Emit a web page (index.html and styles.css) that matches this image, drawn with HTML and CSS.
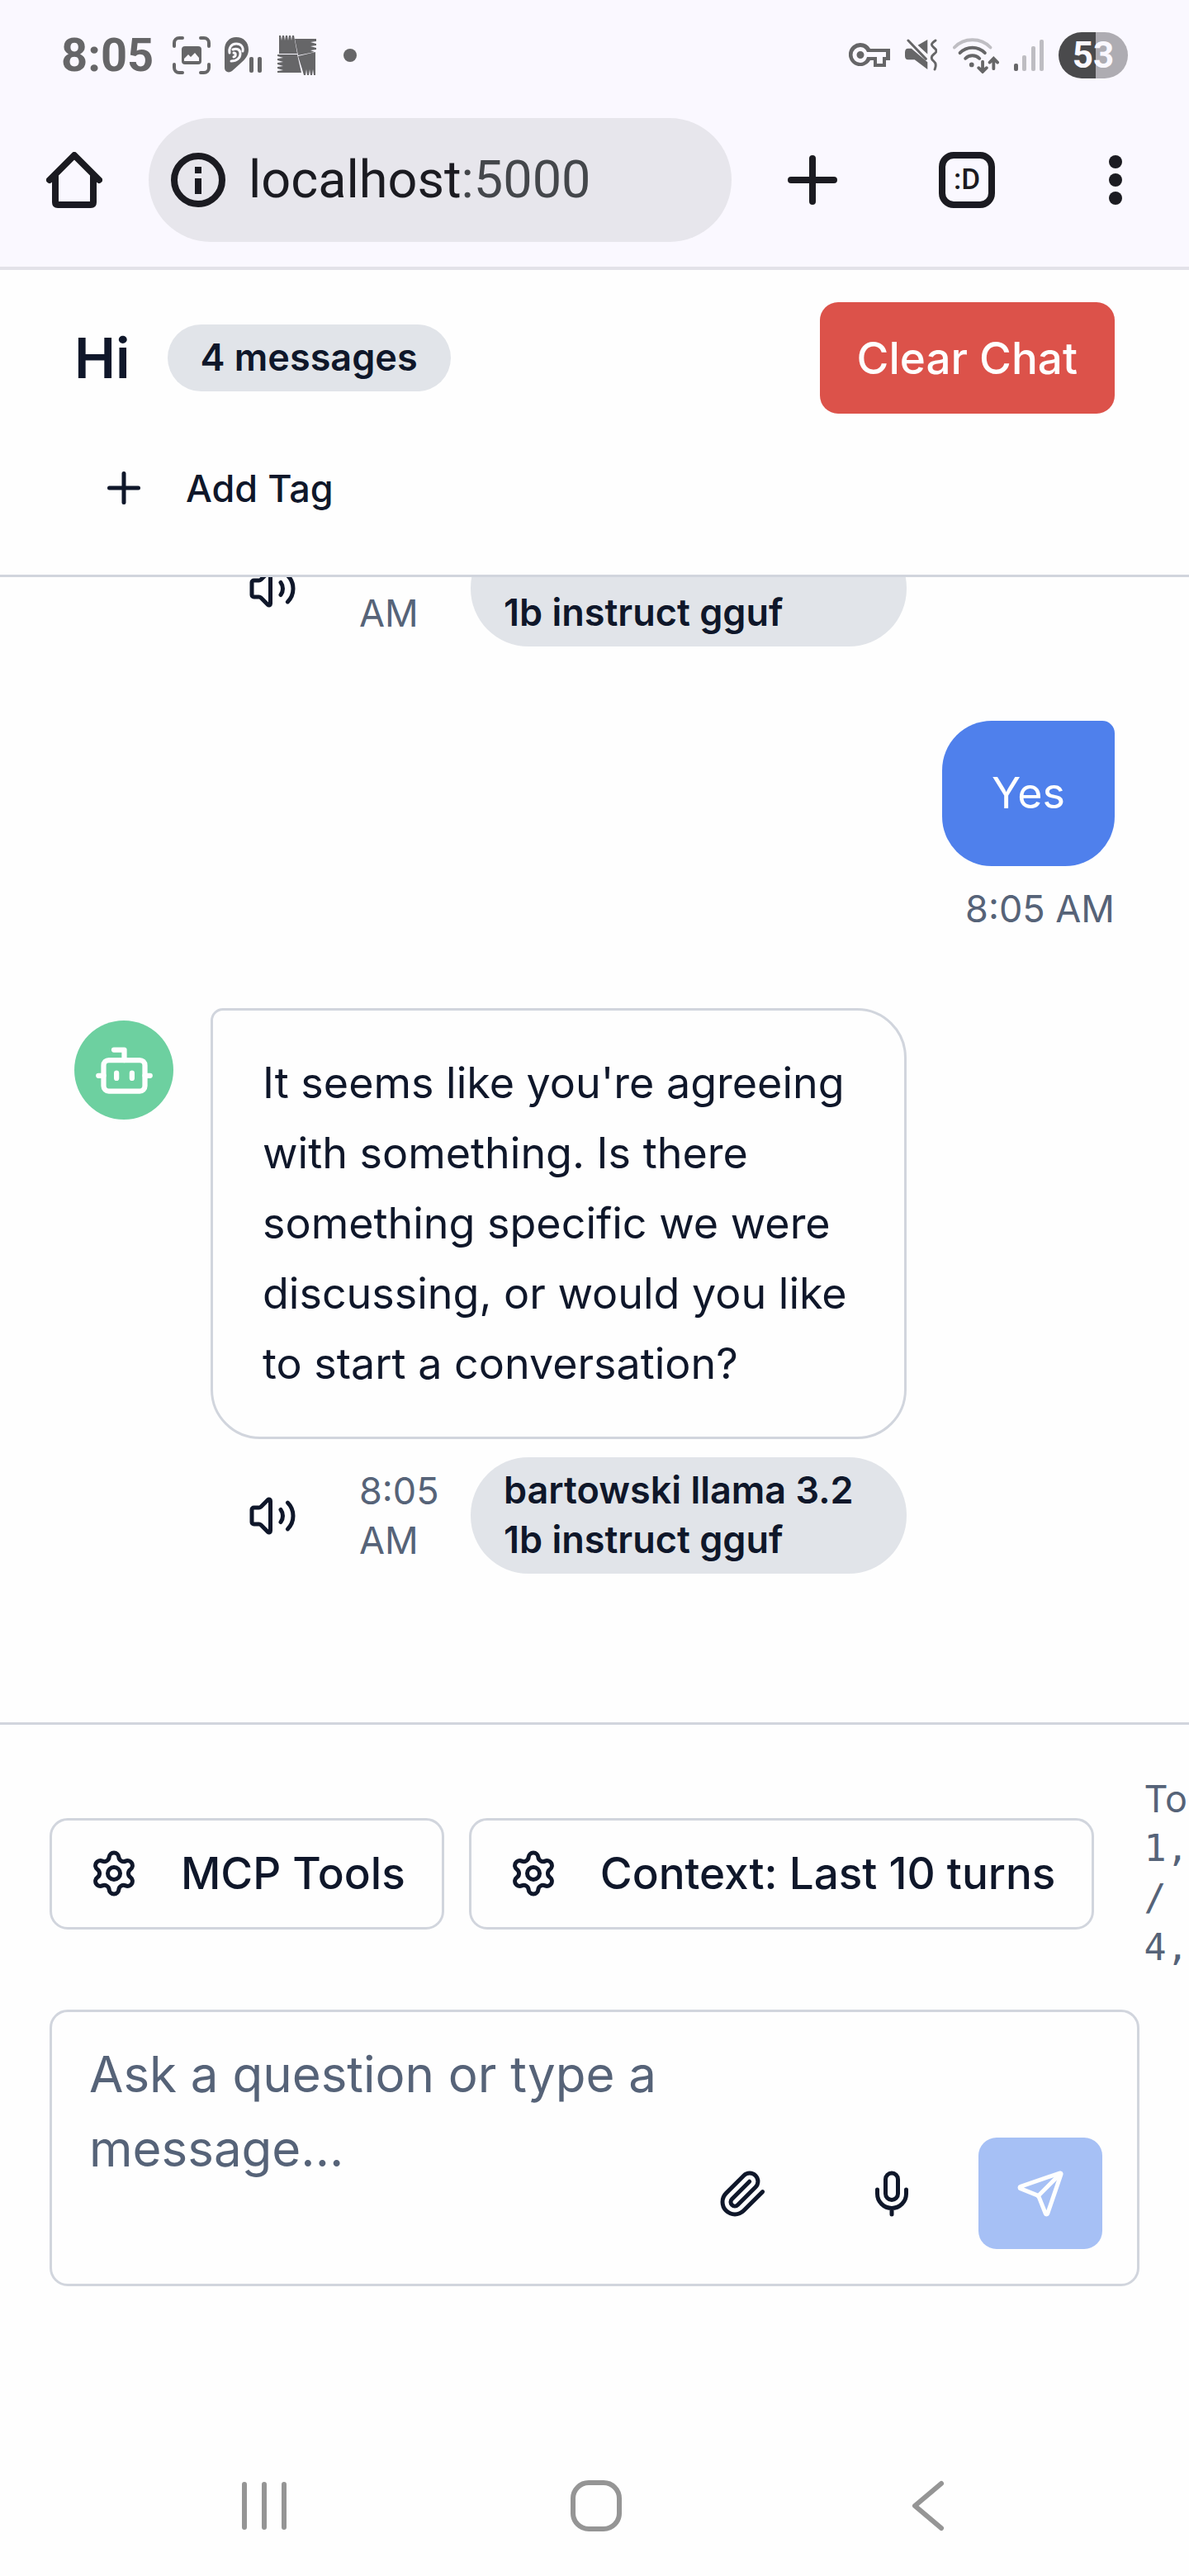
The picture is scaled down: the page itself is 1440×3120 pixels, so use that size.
FILE: index.html
```html
<!DOCTYPE html>
<html lang="en">
<head>
<meta charset="utf-8">
<meta name="viewport" content="width=device-width, initial-scale=1">
<title>Hi</title>
<link rel="stylesheet" href="styles.css">
</head>
<body>
<div class="screen">
  <div class="status-bar">
    <div class="status-group">
      <span class="clock">8:05</span>
      <svg class="i-capture" viewBox="0 0 46 46" fill="none" stroke="currentColor" stroke-width="4" stroke-linecap="round"><path d="M2 12V8a6 6 0 0 1 6-6h4M34 2h4a6 6 0 0 1 6 6v4M44 34v4a6 6 0 0 1-6 6h-4M12 44H8a6 6 0 0 1-6-6v-4"/><rect x="11" y="12" width="24" height="22" rx="4" fill="currentColor" stroke="none"/><path d="M14 30v-3l5-5 3 3 5-5 5 6v4z" fill="#faf8ff" stroke="none"/></svg>
      <svg class="i-ear" viewBox="0 0 48 46"><path fill="currentColor" d="M15 1C7 1 1 7 1 16v22c0 5 5 7 9 4l10-9c6-5 10-10 10-17C30 7 24 1 15 1z"/><path fill="none" stroke="#faf8ff" stroke-width="3" stroke-linecap="round" d="M7 20c-1-6 2-11 8-11 6 0 9 4 8 9M11 16c5-2 9 0 9 5s-4 9-11 9M12 20c3 0 3 4 0 5"/><rect x="31" y="25" width="5" height="19" rx="2" fill="currentColor"/><rect x="41" y="25" width="5" height="19" rx="2" fill="currentColor"/></svg>
      <svg class="i-patch" viewBox="0 0 48 48" fill="currentColor"><path d="M3 0h2l1 6 1-6h2l1 6 1-6h2l1 6 1-6h2l1 6 1-6h2l4 22H3z"/><path d="M22 4h26v3l-7 1 7 2v2l-7 1 7 2v2l-7 1 5 2-20 4z"/><path d="M1 23h24l5 22H1v-2l7-1-7-2v-2l7-1-7-2v-2l7-1-7-2v-2l7-1-7-2z"/><path d="M26 25l21-5v28h-2l-1-7-1 7h-2l-1-7-1 7h-2l-1-7-1 7h-2l-2-7z"/></svg>
      <span class="more-dot"></span>
    </div>
    <div class="status-group status-right">
      <svg class="i-key" viewBox="0 0 50 30"><path fill="currentColor" fill-rule="evenodd" d="M14 0a14 14 0 1 0 12 21h4v8h15v-8h5V7H26A14 14 0 0 0 14 0zm0 5c4 0 7 3 8 6h23v6h-4v8h-7v-8H22c-1 4-4 7-8 7a9 9 0 0 1 0-19zm0 5a4 4 0 1 0 0 9 4 4 0 0 0 0-9z"/></svg>
      <svg class="i-mute" viewBox="0 0 40 40"><path fill="currentColor" d="M0 17c0-3 1-5 4-5h4l20 17v9L12 26H4c-3 0-4-2-4-5zM16 8l12-7v18z"/><path fill="none" stroke="currentColor" stroke-width="3" stroke-linecap="round" d="M4 2l22 23M38 2c-6 4-6 6-2 9s4 5 0 8-4 6 0 9 2 7 1 10"/></svg>
      <svg class="i-wifi" viewBox="0 0 60 46" fill="none" stroke="currentColor" stroke-width="4" stroke-linecap="round"><path opacity=".4" d="M3 13c12-13 34-13 46 0"/><path d="M10 20c9-9 23-9 32 0M17 27c5-5 13-5 18 0"/><circle cx="25" cy="35" r="3" fill="currentColor" stroke="none"/><path d="M39 31v12M34 39l5 5 5-5M53 40V27M48 32l5-5 5 5"/></svg>
      <svg class="i-signal" viewBox="0 0 36 40" fill="currentColor"><rect y="30" width="5" height="9" rx="2"/><g opacity=".4"><rect x="10" y="20" width="5" height="19" rx="2"/><rect x="21" y="9" width="5" height="30" rx="2"/><rect x="31" y="1" width="5" height="38" rx="2"/></g></svg>
      <span class="battery">53</span>
    </div>
  </div>

  <div class="browser-bar">
    <button class="plain" aria-label="Home"><svg class="i-68" viewBox="0 0 68 68" fill="none" stroke="currentColor" stroke-width="8" stroke-linecap="round" stroke-linejoin="round"><path d="M4 34L34 4l30 30"/><path d="M11 29v32q0 3 3 3h40q3 0 3-3V29"/></svg></button>
    <div class="address">
      <svg class="i-66" viewBox="0 0 66 66" fill="none" stroke="currentColor" stroke-width="8"><circle cx="33" cy="33" r="29"/><path d="M33 17v8M33 31v19"/></svg>
      <span class="url">localhost<span class="port">:5000</span></span>
    </div>
    <button class="plain plus" aria-label="New tab"><svg class="i-60" viewBox="0 0 60 60" fill="none" stroke="currentColor" stroke-width="8" stroke-linecap="round"><path d="M30 4v52M4 30h52"/></svg></button>
    <button class="plain tabs" aria-label="Open tabs">:D</button>
    <button class="plain" aria-label="Menu"><svg class="i-dots" viewBox="0 0 16 60" fill="currentColor"><circle cx="8" cy="8" r="8"/><circle cx="8" cy="30" r="8"/><circle cx="8" cy="52" r="8"/></svg></button>
  </div>

  <header class="chat-header">
    <div class="title-row">
      <h1>Hi</h1>
      <span class="badge">4 messages</span>
      <button class="clear">Clear Chat</button>
    </div>
    <button class="add-tag"><svg class="icon" viewBox="0 0 24 24"><path d="M5 12h14M12 5v14"/></svg>Add Tag</button>
  </header>

  <main class="messages">
    <div class="meta meta-first">
      <button class="speak" aria-label="Read aloud"><svg class="icon" viewBox="0 0 24 24"><path d="M11 4.702a.705.705 0 0 0-1.203-.498L6.413 7.587A1.4 1.4 0 0 1 5.416 8H3a1 1 0 0 0-1 1v6a1 1 0 0 0 1 1h2.416a1.4 1.4 0 0 1 .997.413l3.383 3.384A.705.705 0 0 0 11 19.298z"/><path d="M16 9a5 5 0 0 1 0 6M19.364 18.364a9 9 0 0 0 0-12.728"/></svg></button>
      <span class="time">8:05 AM</span>
      <span class="badge model">bartowski llama 3.2 1b instruct gguf</span>
    </div>
    <div class="message-user">
      <p class="bubble">Yes</p>
      <span class="time">8:05 AM</span>
    </div>
    <div class="message-bot">
      <span class="avatar"><svg viewBox="0 0 24 24"><path d="M12 8V4H8"/><rect width="16" height="12" x="4" y="8" rx="2"/><path d="M2 14h2M20 14h2M15 13v2M9 13v2"/></svg></span>
      <div class="bot-body">
        <p class="bubble">It seems like you're agreeing with something. Is there something specific we were discussing, or would you like to start a conversation?</p>
        <div class="meta">
          <button class="speak" aria-label="Read aloud"><svg class="icon" viewBox="0 0 24 24"><path d="M11 4.702a.705.705 0 0 0-1.203-.498L6.413 7.587A1.4 1.4 0 0 1 5.416 8H3a1 1 0 0 0-1 1v6a1 1 0 0 0 1 1h2.416a1.4 1.4 0 0 1 .997.413l3.383 3.384A.705.705 0 0 0 11 19.298z"/><path d="M16 9a5 5 0 0 1 0 6M19.364 18.364a9 9 0 0 0 0-12.728"/></svg></button>
          <span class="time">8:05 AM</span>
          <span class="badge model">bartowski llama 3.2 1b instruct gguf</span>
        </div>
      </div>
    </div>
  </main>

  <footer class="composer">
    <div class="tools">
      <button class="outline"><svg class="icon" viewBox="0 0 24 24"><path d="M9.671 4.136a2.34 2.34 0 0 1 4.659 0 2.34 2.34 0 0 0 3.319 1.915 2.34 2.34 0 0 1 2.33 4.033 2.34 2.34 0 0 0 0 3.831 2.34 2.34 0 0 1-2.33 4.033 2.34 2.34 0 0 0-3.319 1.915 2.34 2.34 0 0 1-4.659 0 2.34 2.34 0 0 0-3.32-1.915 2.34 2.34 0 0 1-2.33-4.033 2.34 2.34 0 0 0 0-3.831A2.34 2.34 0 0 1 6.35 6.051a2.34 2.34 0 0 0 3.319-1.915"/><circle cx="12" cy="12" r="3"/></svg>MCP Tools</button>
      <button class="outline"><svg class="icon" viewBox="0 0 24 24"><path d="M9.671 4.136a2.34 2.34 0 0 1 4.659 0 2.34 2.34 0 0 0 3.319 1.915 2.34 2.34 0 0 1 2.33 4.033 2.34 2.34 0 0 0 0 3.831 2.34 2.34 0 0 1-2.33 4.033 2.34 2.34 0 0 0-3.319 1.915 2.34 2.34 0 0 1-4.659 0 2.34 2.34 0 0 0-3.32-1.915 2.34 2.34 0 0 1-2.33-4.033 2.34 2.34 0 0 0 0-3.831A2.34 2.34 0 0 1 6.35 6.051a2.34 2.34 0 0 0 3.319-1.915"/><circle cx="12" cy="12" r="3"/></svg>Context: Last 10 turns</button>
      <div class="tokens"><span>Tokens:</span><span class="count">1,</span><span class="count">/</span><span class="count">4,</span></div>
    </div>
    <div class="input-box">
      <textarea aria-label="Message" rows="3" placeholder="Ask a question or type a message..."></textarea>
      <div class="actions">
        <button class="action" aria-label="Attach file"><svg class="icon" viewBox="0 0 24 24"><path d="m21.44 11.05-9.19 9.19a6 6 0 0 1-8.49-8.49l8.57-8.57A4 4 0 1 1 18 8.84l-8.59 8.57a2 2 0 0 1-2.83-2.83l8.49-8.48"/></svg></button>
        <button class="action" aria-label="Record voice"><svg class="icon" viewBox="0 0 24 24"><path d="M12 2a3 3 0 0 0-3 3v7a3 3 0 0 0 6 0V5a3 3 0 0 0-3-3Z"/><path d="M19 10v2a7 7 0 0 1-14 0v-2M12 19v3"/></svg></button>
        <button class="action send" aria-label="Send"><svg class="icon" viewBox="0 0 24 24"><path d="M14.536 21.686a.5.5 0 0 0 .937-.024l6.5-19a.496.496 0 0 0-.635-.635l-19 6.5a.5.5 0 0 0-.024.937l7.93 3.18a2 2 0 0 1 1.112 1.11z"/><path d="m21.854 2.147-10.94 10.939"/></svg></button>
      </div>
    </div>
  </footer>

  <nav class="system-nav">
    <button class="plain" aria-label="Recent apps"><svg class="i-62" viewBox="0 0 62 62"><path d="M7 5v52M31 5v52M55 5v52"/></svg></button>
    <button class="plain" aria-label="Home screen"><svg class="i-62" viewBox="0 0 62 62"><rect x="3" y="3" width="56" height="56" rx="19"/></svg></button>
    <button class="plain" aria-label="Back"><svg class="i-62" viewBox="0 0 62 62"><path d="M47 4L15 31l32 27"/></svg></button>
  </nav>
</div>
</body>
</html>
```
FILE: styles.css
```css
* { box-sizing: border-box; }

body {
  margin: 0;
  background: #fefefe;
  color: #0f172a;
  font-family: Inter, "Liberation Sans", sans-serif;
  font-size: 53px;
}

button {
  font: inherit;
  color: inherit;
  border: 0;
  padding: 0;
  margin: 0;
  background: none;
}

svg { display: block; flex: none; }

.screen {
  height: 100vh;
  display: flex;
  flex-direction: column;
  overflow: hidden;
}
.screen > * { flex: none; }

.icon {
  width: 60px;
  height: 60px;
  fill: none;
  stroke: currentColor;
  stroke-width: 2;
  stroke-linecap: round;
  stroke-linejoin: round;
}

/* Phone status bar */
.status-bar {
  display: flex;
  justify-content: space-between;
  align-items: center;
  height: 133px;
  padding: 0 74px;
  background: #faf8ff;
  color: #666668;
}
.status-group { display: flex; align-items: center; gap: 16px; }
.clock { font: 700 56px/60px Roboto, sans-serif; margin-right: 7px; }
.i-capture { width: 46px; height: 46px; }
.i-ear { width: 48px; height: 46px; }
.i-patch { width: 48px; height: 48px; }
.more-dot { width: 16px; height: 16px; margin-left: 17px; border-radius: 8px; background: currentColor; }
.status-right { gap: 18px; }
.i-key { width: 50px; height: 30px; }
.i-mute { width: 39px; height: 39px; }
.i-wifi { width: 57px; height: 44px; }
.i-signal { width: 36px; height: 40px; }
.battery {
  width: 84px;
  border-radius: 28px;
  background: linear-gradient(90deg, #4a4a4c 53%, #aeacb2 53%);
  color: #faf8ff;
  font: 700 44px/56px Roboto, sans-serif;
  text-align: center;
}

/* Browser toolbar */
.browser-bar {
  display: flex;
  align-items: center;
  height: 194px;
  padding: 0 81px 20px 56px;
  border-bottom: 4px solid #e3e2e9;
  background: #faf8ff;
  color: #1b1b21;
}
.i-68 { width: 68px; height: 68px; }
.i-66 { width: 66px; height: 66px; }
.i-60 { width: 60px; height: 60px; }
.i-dots { width: 16px; height: 60px; }
.address {
  flex: 1;
  display: flex;
  align-items: center;
  gap: 28px;
  height: 150px;
  margin-left: 56px;
  padding: 0 27px;
  border-radius: 75px;
  background: #e7e6ec;
}
.url { font: 400 63px/80px Roboto, sans-serif; }
.port { color: #44474b; }
.plus { margin: 0 123px 0 68px; }
.tabs {
  width: 68px;
  height: 68px;
  margin-right: 138px;
  border: 8px solid currentColor;
  border-radius: 18px;
  font: 500 35px/52px Roboto, sans-serif;
}

/* Chat header */
.chat-header { padding: 39px 90px 45px; border-bottom: 3px solid #d1d5dd; }
.title-row { display: flex; align-items: center; gap: 45px; margin-bottom: 30px; }
h1 { margin: 0; font-size: 67px; line-height: 105px; font-weight: 600; }
.badge {
  padding: 10px 40px 11px;
  border-radius: 70px;
  background: #e1e4e9;
  font-size: 45px;
  line-height: 60px;
  font-weight: 600;
}
.clear {
  height: 135px;
  margin-left: auto;
  padding: 0 45px;
  border-radius: 22px;
  background: #dc524a;
  color: #fefefe;
  font-weight: 500;
}
.add-tag {
  display: flex;
  align-items: center;
  gap: 45px;
  height: 120px;
  padding: 0 30px;
  font-size: 45px;
  font-weight: 500;
}

/* Conversation, kept at its latest message */
.screen > .messages {
  display: flex;
  flex: 1 1 0;
  flex-direction: column;
  justify-content: flex-end;
  gap: 90px;
  min-height: 0;
  padding: 0 90px 180px;
  overflow: hidden;
}
.messages > * { flex: none; }
.bubble { margin: 0; padding: 45px 60px 46px; border-radius: 60px; font-size: 52px; line-height: 85px; }
.time { color: #566378; font-size: 45px; line-height: 60px; }
.message-user { display: flex; flex-direction: column; align-items: flex-end; gap: 22px; }
.message-user .bubble { border-top-right-radius: 15px; background: #4f80ec; color: #fefefe; }
.message-bot { display: flex; gap: 45px; max-width: 80%; }
.avatar {
  flex: none;
  display: grid;
  place-items: center;
  width: 120px;
  height: 120px;
  margin-top: 15px;
  border-radius: 60px;
  background: #6dd0a0;
}
.avatar svg {
  width: 75px;
  height: 75px;
  fill: none;
  stroke: #fefefe;
  stroke-width: 2;
  stroke-linecap: round;
  stroke-linejoin: round;
}
.bot-body { flex: 1; }
.bot-body .bubble { border: 3px solid #d1d5dd; border-top-left-radius: 15px; }
.meta { display: flex; align-items: center; gap: 30px; margin-top: 22px; }
.meta-first { width: 80%; margin: 0; padding-left: 165px; }
.speak { padding: 0 45px; }
.meta .time { flex: none; width: 105px; }
.model { flex: 1; }

/* Message composer */
.composer { padding: 60px; border-top: 3px solid #d1d5dd; }
.tools { display: flex; align-items: center; gap: 30px; margin-bottom: 45px; }
.outline {
  flex: none;
  display: flex;
  align-items: center;
  gap: 51px;
  height: 135px;
  padding: 0 44px 0 45px;
  border: 3px solid #d1d5dd;
  border-radius: 22px;
  font-weight: 500;
  white-space: nowrap;
}
.tokens {
  display: flex;
  flex-direction: column;
  width: 0;
  margin-left: 30px;
  color: #566378;
  font-size: 45px;
  line-height: 60px;
  white-space: nowrap;
}
.count { font-family: "DejaVu Sans Mono", monospace; }
.input-box {
  display: flex;
  align-items: flex-end;
  padding: 30px 42px 42px 45px;
  border: 3px solid #d1d5dd;
  border-radius: 22px;
}
textarea {
  flex: 1;
  min-width: 0;
  height: 257px;
  padding: 0;
  border: 0;
  background: none;
  color: inherit;
  font: inherit;
  font-size: 60px;
  line-height: 90px;
  resize: none;
}
textarea::placeholder { color: #566378; opacity: 1; }
.actions { display: flex; gap: 30px; }
.action { display: grid; place-items: center; width: 150px; height: 135px; }
.send { border-radius: 22px; background: #a6c0f5; color: #fefefe; }

/* Phone navigation */
.system-nav {
  display: grid;
  grid-template-columns: repeat(3, 1fr);
  justify-items: center;
  padding: 175px 115px 54px 119px;
}
.i-62 {
  width: 62px;
  height: 62px;
  fill: none;
  stroke: #959595;
  stroke-width: 6;
  stroke-linecap: round;
  stroke-linejoin: round;
}
```
